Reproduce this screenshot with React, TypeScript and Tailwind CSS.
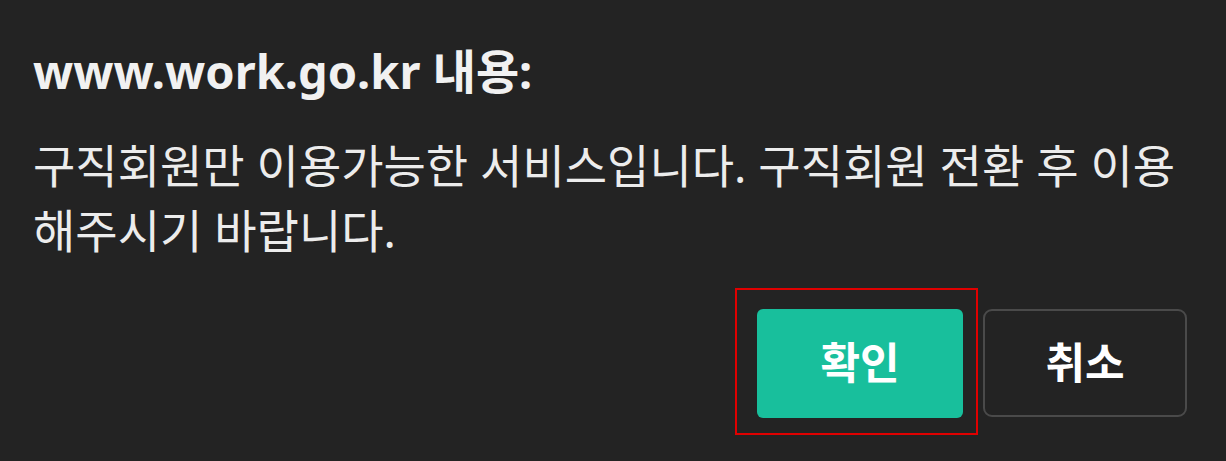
import React from "react";

export default function App() {
  return (
    <div
      className="w-[1226px] h-[461px] bg-[#232323] text-[#f1f1f1] overflow-hidden"
      style={{ fontFamily: '"Noto Sans", "Noto Sans CJK KR", sans-serif' }}
    >
      <div className="pl-[33px] pt-[39px]">
        <div className="text-[47px] font-bold leading-[64px]">
          www.work.go.kr 내용:
        </div>
        <div className="mt-[30px] text-[46px] leading-[65px] text-[#ececec]">
          <div className="whitespace-nowrap">구직회원만 이용가능한 서비스입니다. 구직회원 전환 후 이용</div>
          <div>해주시기 바랍니다.</div>
        </div>
      </div>
      <div className="flex justify-end gap-[20px] pr-[39px] mt-[46px]">
        <div className="relative">
          <button className="w-[206px] h-[109px] rounded-[6px] bg-[#18bf9c] text-white text-[43px] font-bold">
            확인
          </button>
          <div className="absolute left-[-22px] top-[-21px] right-[-15px] bottom-[-17px] border-2 border-[#e00000] pointer-events-none" />
        </div>
        <button className="w-[204px] h-[108px] rounded-[9px] border-2 border-[#4a4a4a] bg-transparent text-white text-[43px] font-bold">
          취소
        </button>
      </div>
    </div>
  );
}
